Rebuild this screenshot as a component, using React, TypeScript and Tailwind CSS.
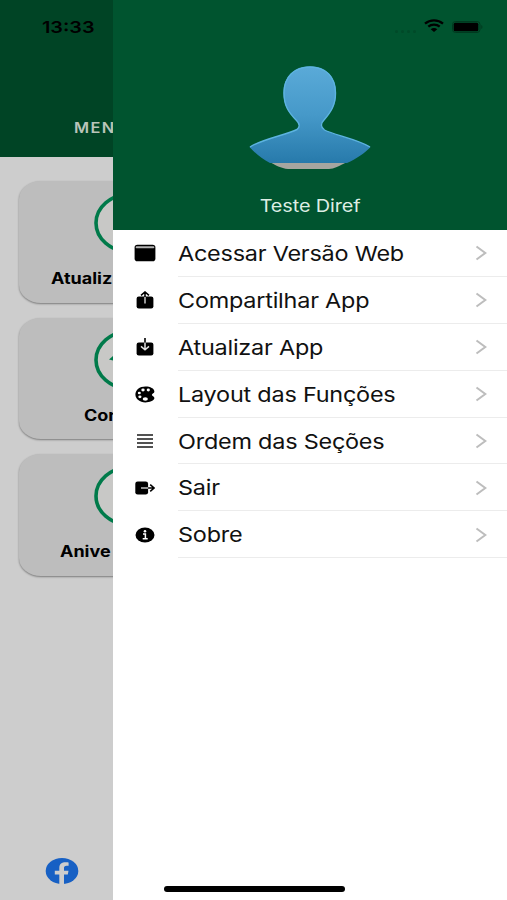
import React from 'react';

interface MenuItem {
  label: string;
  icon: React.ReactNode;
}

const menuItems: MenuItem[] = [
  {
    label: 'Acessar Versão Web',
    icon: (
      <svg width="22" height="18" viewBox="0 0 22 18">
        <rect x="0.6" y="0.8" width="20.8" height="16.4" rx="2.8" />
        <path d="M2.6 3.3h16.8" stroke="#b5b5b5" strokeWidth="1.9" strokeLinecap="round" />
      </svg>
    ),
  },
  {
    label: 'Compartilhar App',
    icon: (
      <svg width="18" height="18" viewBox="0 0 18 18" fill="none">
        <rect x="0.6" y="5.6" width="16.8" height="11.8" rx="2.2" fill="black" />
        <path d="M9 6v6.5" stroke="#c9c9c9" strokeWidth="1.5" />
        <path d="M9 6V1.2M5 4.4L9 1l4 3.4" stroke="black" strokeWidth="1.6" />
      </svg>
    ),
  },
  {
    label: 'Atualizar App',
    icon: (
      <svg width="18" height="18" viewBox="0 0 18 18" fill="none">
        <rect x="0.6" y="4.6" width="16.8" height="12.8" rx="2.2" fill="black" />
        <path d="M9 0v5" stroke="black" strokeWidth="1.6" />
        <path d="M9 4.6v7M5 8.400L9 11.800l4-3.400" stroke="#e4e4e4" strokeWidth="1.5" />
      </svg>
    ),
  },
  {
    label: 'Layout das Funções',
    icon: (
      <svg width="20" height="17" viewBox="0 0 20 17">
        <path d="M10.5.5C4.6.5.4 4 .4 8.6c0 4.5 4.4 7.800 10 7.800 4 0 8.4-1.500 9-4.100.3-1.800-2.700-2.200-2.500-3.500.2-1.400 2.500-1.300 2.500-3.300C19.400 2.500 15.300.5 10.500.5Z" />
        <g fill="white">
          <ellipse cx="8" cy="4" rx="1.7" ry="1.4" />
          <ellipse cx="13.3" cy="4" rx="1.6" ry="1.4" />
          <ellipse cx="4.3" cy="7" rx="1.5" ry="1.3" />
          <ellipse cx="4.9" cy="10.8" rx="1.6" ry="1.4" />
          <ellipse cx="10.3" cy="13" rx="2.6" ry="1.800" />
        </g>
      </svg>
    ),
  },
  {
    label: 'Ordem das Seções',
    icon: (
      <svg width="16" height="14" viewBox="0 0 16 14">
        <path d="M0 1h16M0 5h16M0 9h16M0 13h16" stroke="#1a1a1a" strokeWidth="1.5" />
      </svg>
    ),
  },
  {
    label: 'Sair',
    icon: (
      <svg width="20" height="14" viewBox="0 0 20 14" fill="none">
        <rect x="0.3" y="0.4" width="12.8" height="13.2" rx="2.4" fill="black" />
        <path d="M6 7h7.2" stroke="#d0d0d0" strokeWidth="1.4" />
        <path d="M13.1 7H19M15.200 3.600L19.200 7l-4 3.400" stroke="black" strokeWidth="1.6" />
      </svg>
    ),
  },
  {
    label: 'Sobre',
    icon: (
      <svg width="20" height="16" viewBox="0 0 20 16" fill="none">
        <ellipse cx="10" cy="8" rx="9.5" ry="7.6" fill="black" />
        <circle cx="10" cy="4.3" r="1.3" fill="white" />
        <path d="M8 7.100h2.400v4.400M7.700 11.700h5" stroke="white" strokeWidth="1.5" />
      </svg>
    ),
  },
];

const cards = [
  { label: 'Atualiz', padding: 'pl-[31.5px]', mark: false },
  { label: 'Con', padding: 'pl-[65px]', mark: true },
  { label: 'Anive', padding: 'pl-[41px]', mark: false },
];

const HomePage = () => (
  <div className="flex h-full w-[113px] flex-col overflow-hidden bg-[#cdcdcd]">
    <header className="flex h-[157px] shrink-0 items-end bg-[#004425] pb-[19px] pl-[74px]">
      <span className="origin-left scale-x-[1.17] text-[14px] leading-5 font-semibold tracking-[1.2px] text-[#b9c4b9]">
        MEN
      </span>
    </header>
    <main className="flex flex-col gap-[15px] pt-6 pl-[19px]">
      {cards.map((card) => (
        <div
          key={card.label}
          className="h-[121.5px] w-[222px] shrink-0 rounded-[22px/18px] bg-[#bdbdbd] pt-3 shadow-[0_1px_2px_rgba(0,0,0,0.4)]"
        >
          <svg className="ml-[75px]" width="72" height="60" viewBox="0 0 72 60">
            <ellipse cx="35" cy="30" rx="33" ry="28.5" fill="#c8c8c6" stroke="#007a4a" strokeWidth="3.6" />
            {card.mark && <path d="M15 29.500l4-3.500v4.500Z" fill="#007a4a" />}
          </svg>
          <div className={`${card.padding} pt-4`}>
            <span className="block w-fit origin-left scale-x-[1.16] text-[15.5px] leading-5 font-bold whitespace-nowrap text-black">
              {card.label}
            </span>
          </div>
        </div>
      ))}
    </main>
    <footer className="mt-auto pb-[15px] pl-[45px]">
      <svg width="34" height="28" viewBox="0 0 34 28">
        <ellipse cx="17" cy="14" rx="16.3" ry="13" fill="#1760c4" />
        <path
          d="M14.300 27.200V17.500H9.800v-3.800h4.500v-2.800c0-4 2.600-5.600 6.300-5.600 1.500 0 3 .2 3 .2v3.200h-2c-2 0-2.600 1-2.600 2.200v2.800h4.500l-.7 3.800H19V27.200Z"
          fill="#cdcdcd"
        />
      </svg>
    </footer>
  </div>
);

const Avatar = () => (
  <svg width="124" height="106" viewBox="0 0 124 106">
    <defs>
      <linearGradient id="person" x1="0" y1="0" x2="0" y2="1">
        <stop offset="0" stopColor="#5aaad8" />
        <stop offset="0.5" stopColor="#4699c9" />
        <stop offset="1" stopColor="#277aab" />
      </linearGradient>
    </defs>
    <path d="M22 97H99C91 101 86 104 81 104H40C33 103.500 27 100 22 97Z" fill="#a6a6a0" />
    <path
      d="M62 1.500C46 1.500 35.500 12 35.500 28C35.500 40 40 47 48.500 55.500C52 59 52 62 49 64.500C38 70 14 74 1.500 82C7 88 14 94 22 98H99C108 94 117 88 122.500 82C109 74 86 70 76.500 65C72.500 62 72.500 58.500 76 55C83 47 88 40 88 28C88 12 78 1.500 62 1.500Z"
      fill="url(#person)"
    />
    <path
      d="M2 82C14 74 38 70 49 64.500C52 62 52 59 48.500 55.500C40 47 36 40 36 28C36 12 46 2 62 2C78 2 87.500 12 87.500 28C87.500 40 83 47 76 55C72.500 58.500 72.500 62 76.500 65C86 70 109 74 122 82"
      fill="none"
      stroke="#5db3e0"
      strokeWidth="1.4"
    />
  </svg>
);

const StatusBar = () => (
  <div className="absolute inset-x-0 top-0 flex h-[55px] items-center justify-between pr-6 pl-[42px] text-black">
    <span className="origin-left scale-x-[1.2] text-[16.5px] font-semibold">13:33</span>
    <div className="flex items-center gap-2">
      <div className="flex gap-[3px] pt-2">
        {[0, 1, 2, 3].map((dot) => (
          <span key={dot} className="h-[3px] w-[3px] rounded-full bg-[#004a29]" />
        ))}
      </div>
      <svg className="-mt-1" width="20" height="14" viewBox="0 0 20 14" fill="none" stroke="black" strokeWidth="2.3">
        <path d="M1 4.600C6 .2 14 .2 19 4.600M4.300 7.700c3.200-2.800 8.200-2.800 11.400 0" />
        <path d="M6.700 10.200c1.800-1.500 4.800-1.500 6.600 0L10 13Z" fill="black" stroke="none" />
      </svg>
      <svg className="-mt-0.5" width="31" height="12" viewBox="0 0 31 12">
        <rect x="0.5" y="0.5" width="27.5" height="11" rx="3" fill="none" stroke="#00391f" />
        <rect x="1.7" y="1.7" width="24.6" height="8.600" rx="1.5" />
        <path d="M29.300 4v4c1.500-.6 1.500-3.400 0-4Z" fill="#00391f" />
      </svg>
    </div>
  </div>
);

const Drawer = () => (
  <aside className="absolute inset-y-0 right-0 flex w-[394.5px] flex-col bg-white">
    <header className="flex h-[230px] shrink-0 flex-col items-center bg-[#00542f] pt-[65px]">
      <Avatar />
      <span className="mt-[23px] scale-x-[1.17] text-[17px] leading-6 tracking-[-0.1px] text-[#deeee4]">
        Teste Diref
      </span>
    </header>
    <nav>
      <ul>
        {menuItems.map((item) => (
          <li key={item.label} className="flex h-[46.9px]">
            <div className="flex w-[65px] shrink-0 items-center justify-center">{item.icon}</div>
            <div className="flex flex-1 items-center justify-between border-b border-[#ececec] pr-5">
              <span className="mt-0.5 origin-left scale-x-[1.143] text-[20.5px] leading-6 tracking-[-0.2px] whitespace-nowrap text-[#111111]">
                {item.label}
              </span>
              <svg className="mt-px" width="12" height="16" viewBox="0 0 12 16" fill="none">
                <path d="M1.500 1.500L10.300 8l-8.800 6.500" stroke="#bdbdbd" strokeWidth="2" />
              </svg>
            </div>
          </li>
        ))}
      </ul>
    </nav>
    <div className="mt-auto mb-[8.5px] ml-[51px] h-[5.5px] w-[181px] rounded-full bg-black" />
  </aside>
);

export default function App() {
  return (
    <div className="relative h-[900px] w-[507px] overflow-hidden bg-[#cdcdcd] font-['Inter','Liberation_Sans',sans-serif]">
      <HomePage />
      <Drawer />
      <StatusBar />
    </div>
  );
}
